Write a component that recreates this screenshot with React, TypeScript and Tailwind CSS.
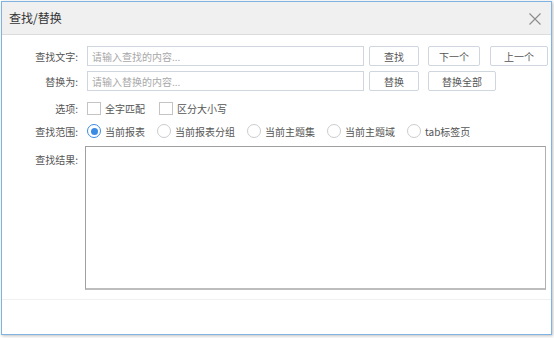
const font = { fontFamily: '"Noto Sans CJK SC", "Noto Sans", sans-serif' };

function Label({ text }: { text: string }) {
  return <div className="w-[76px] shrink-0 text-right text-[10px] text-[#555]">{text}</div>;
}

function Btn({ text, w }: { text: string; w: string }) {
  return (
    <button
      className={`${w} h-[20px] shrink-0 border border-[#cfd6de] bg-white rounded-[2px] text-[10px] text-[#555] flex items-center justify-center`}
    >
      {text}
    </button>
  );
}

function Check({ text }: { text: string }) {
  return (
    <label className="flex items-center">
      <span className="w-[14px] h-[13px] border border-[#c4c4c4] bg-white" />
      <span className="ml-[4px] text-[10px] text-[#555]">{text}</span>
    </label>
  );
}

function Radio({ text, checked }: { text: string; checked?: boolean }) {
  return (
    <label className="flex items-center">
      <span
        className={
          checked
            ? "w-[14px] h-[14px] rounded-full border border-[#3b8be5] flex items-center justify-center"
            : "w-[14px] h-[14px] rounded-full border border-[#cccccc]"
        }
      >
        {checked && <span className="w-[7px] h-[7px] rounded-full bg-[#3b8be5]" />}
      </span>
      <span className="ml-[4px] text-[10px] text-[#555]">{text}</span>
    </label>
  );
}

export default function App() {
  return (
    <div className="w-[554px] h-[338px] bg-white overflow-hidden" style={font}>
      <div className="ml-[1px] mt-[1px] w-[551px] h-[334px] border border-[#7fb3e1] flex flex-col bg-white shadow-[1px_1px_3px_rgba(0,0,0,0.25)]">
        {/* Header */}
        <div className="h-[33px] shrink-0 bg-[#f0f0f0] border-b border-[#dcdcdc] flex items-center justify-between pl-[7px] pr-[10px]">
          <span className="text-[12px] text-[#333]">查找/替换</span>
          <svg width="12" height="12" viewBox="0 0 12 12" className="mt-[1px]">
            <path d="M0.5 0.5 L11.5 11.5 M11.5 0.5 L0.5 11.5" stroke="#8c8c8c" strokeWidth="1.1" fill="none" />
          </svg>
        </div>

        {/* Body */}
        <div className="flex-1 pt-[11px]">
          <div className="flex items-center h-[20px]">
            <Label text="查找文字:" />
            <div className="ml-[9px] w-[277px] h-[20px] border border-[#cfd6de] flex items-center px-[4px] text-[10px] text-[#a8a8a8]">
              请输入查找的内容...
            </div>
            <div className="ml-[5px]">
              <Btn text="查找" w="w-[50px]" />
            </div>
            <div className="ml-[9px]">
              <Btn text="下一个" w="w-[52px]" />
            </div>
            <div className="ml-[10px]">
              <Btn text="上一个" w="w-[58px]" />
            </div>
          </div>

          <div className="flex items-center h-[20px] mt-[5px]">
            <Label text="替换为:" />
            <div className="ml-[9px] w-[277px] h-[20px] border border-[#cfd6de] flex items-center px-[4px] text-[10px] text-[#a8a8a8]">
              请输入替换的内容...
            </div>
            <div className="ml-[5px]">
              <Btn text="替换" w="w-[50px]" />
            </div>
            <div className="ml-[9px]">
              <Btn text="替换全部" w="w-[68px]" />
            </div>
          </div>

          <div className="flex items-center h-[20px] mt-[7px]">
            <Label text="选项:" />
            <div className="ml-[9px] flex items-center gap-[14px]">
              <Check text="全字匹配" />
              <Check text="区分大小写" />
            </div>
          </div>

          <div className="flex items-center h-[20px] mt-[3px]">
            <Label text="查找范围:" />
            <div className="ml-[9px] flex items-center gap-[12px]">
              <Radio text="当前报表" checked />
              <Radio text="当前报表分组" />
              <Radio text="当前主题集" />
              <Radio text="当前主题域" />
              <Radio text="tab标签页" />
            </div>
          </div>

          <div className="flex mt-[5px]">
            <div className="pt-[6px]">
              <Label text="查找结果:" />
            </div>
            <div className="ml-[7px] w-[461px] h-[144px] border border-[#a0a0a0] border-b-2 border-b-[#bdbdbd] border-r-[#b0b0b0] bg-white" />
          </div>

          <div className="mt-[9px] border-t border-[#f0f0f0]" />
        </div>
      </div>
    </div>
  );
}
